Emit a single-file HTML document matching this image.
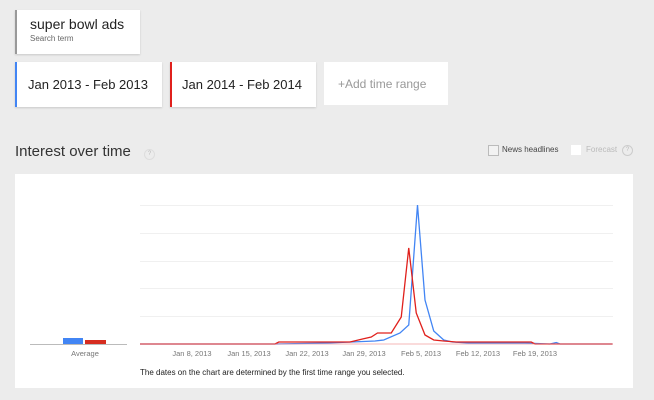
<!DOCTYPE html>
<html><head><style>
body{margin:0;width:654px;height:400px;background:#ececec;font-family:"Liberation Sans",sans-serif;position:relative;overflow:hidden}
.card{position:absolute;background:#fff;box-shadow:0 1px 2px rgba(0,0,0,.15)}
.t{position:absolute;white-space:nowrap}
</style></head><body>
<div class="card" style="left:15px;top:10px;width:125px;height:44px;border-left:2px solid #999;box-sizing:border-box"></div>
<div class="t" style="left:30px;top:16px;font-size:14px;color:#222">super bowl ads</div>
<div class="t" style="left:30px;top:34px;font-size:8px;color:#666">Search term</div>
<div class="card" style="left:15px;top:62px;width:147px;height:45px;border-left:2px solid #4285f4;box-sizing:border-box"></div>
<div class="t" style="left:28px;top:77px;font-size:13px;color:#222">Jan 2013 - Feb 2013</div>
<div class="card" style="left:170px;top:62px;width:146px;height:45px;border-left:2px solid #e0201c;box-sizing:border-box"></div>
<div class="t" style="left:182px;top:77px;font-size:13px;color:#222">Jan 2014 - Feb 2014</div>
<div class="card" style="left:324px;top:62px;width:124px;height:43px;box-shadow:none"></div>
<div class="t" style="left:338px;top:77px;font-size:12px;color:#999">+Add time range</div>
<div class="t" style="left:15px;top:143px;font-size:15px;color:#333">Interest over time</div>
<div class="t" style="left:144px;top:149px;width:9px;height:9px;border:1px solid #ddd;border-radius:50%;font-size:6px;color:#bbb;text-align:center;line-height:9px">?</div>
<div class="t" style="left:488px;top:145px;width:9px;height:9px;border:1px solid #bbb;background:#f2f2f2"></div>
<div class="t" style="left:502px;top:145px;font-size:8px;color:#444">News headlines</div>
<div class="t" style="left:571px;top:145px;width:10px;height:10px;background:#fff"></div>
<div class="t" style="left:586px;top:145px;font-size:8px;color:#bbb">Forecast</div>
<div class="t" style="left:622px;top:145px;width:9px;height:9px;border:1px solid #ccc;border-radius:50%;font-size:6px;color:#bbb;text-align:center;line-height:9px">?</div>
<div class="t" style="left:15px;top:174px;width:618px;height:214px;background:#fff"></div>
<svg style="position:absolute;left:0;top:0" width="654" height="400">
<g stroke="#f0f0f0" stroke-width="1">
<line x1="140" y1="205.5" x2="613" y2="205.5"/><line x1="140" y1="233.5" x2="613" y2="233.5"/><line x1="140" y1="261.5" x2="613" y2="261.5"/><line x1="140" y1="288.5" x2="613" y2="288.5"/><line x1="140" y1="316.5" x2="613" y2="316.5"/>
</g>
<line x1="30" y1="344.5" x2="127" y2="344.5" stroke="#bbb"/>
<rect x="63" y="338" width="20" height="6" fill="#4285f4"/>
<rect x="85" y="340" width="21" height="4" fill="#d62d20"/>
<g transform="scale(1.25 1)">
<polyline fill="none" stroke="#4285f4" stroke-width="1.3" vector-effect="non-scaling-stroke" points="112,344 220,344 262,343 300,341 307,340 320,333 327,325 334,205 340,300 347,331 355,340 362,342 375,343 420,343 440,344 445,342.5 448,344 490,344"/>
<polyline fill="none" stroke="#e0201c" stroke-width="1.3" vector-effect="non-scaling-stroke" points="112,344 220,344 223,342 260,342 280,342 290,339 297,337 302,333 313,333 321,317 327,248 333,313 340,335 347,340 355,341 365,342 425,342 428,344 490,344"/>
</g>
<line x1="140" y1="344" x2="613" y2="344" stroke="#e88" stroke-width="1" opacity=".6"/>
<g font-size="7.5" fill="#777" text-anchor="middle" font-family="Liberation Sans">
<text x="85" y="356">Average</text><text x="192" y="356">Jan 8, 2013</text><text x="249" y="356">Jan 15, 2013</text><text x="307" y="356">Jan 22, 2013</text><text x="364" y="356">Jan 29, 2013</text><text x="421" y="356">Feb 5, 2013</text><text x="478" y="356">Feb 12, 2013</text><text x="535" y="356">Feb 19, 2013</text>
</g>
<text x="140" y="375" font-size="8" fill="#222" font-family="Liberation Sans">The dates on the chart are determined by the first time range you selected.</text>
</svg>
</body></html>
